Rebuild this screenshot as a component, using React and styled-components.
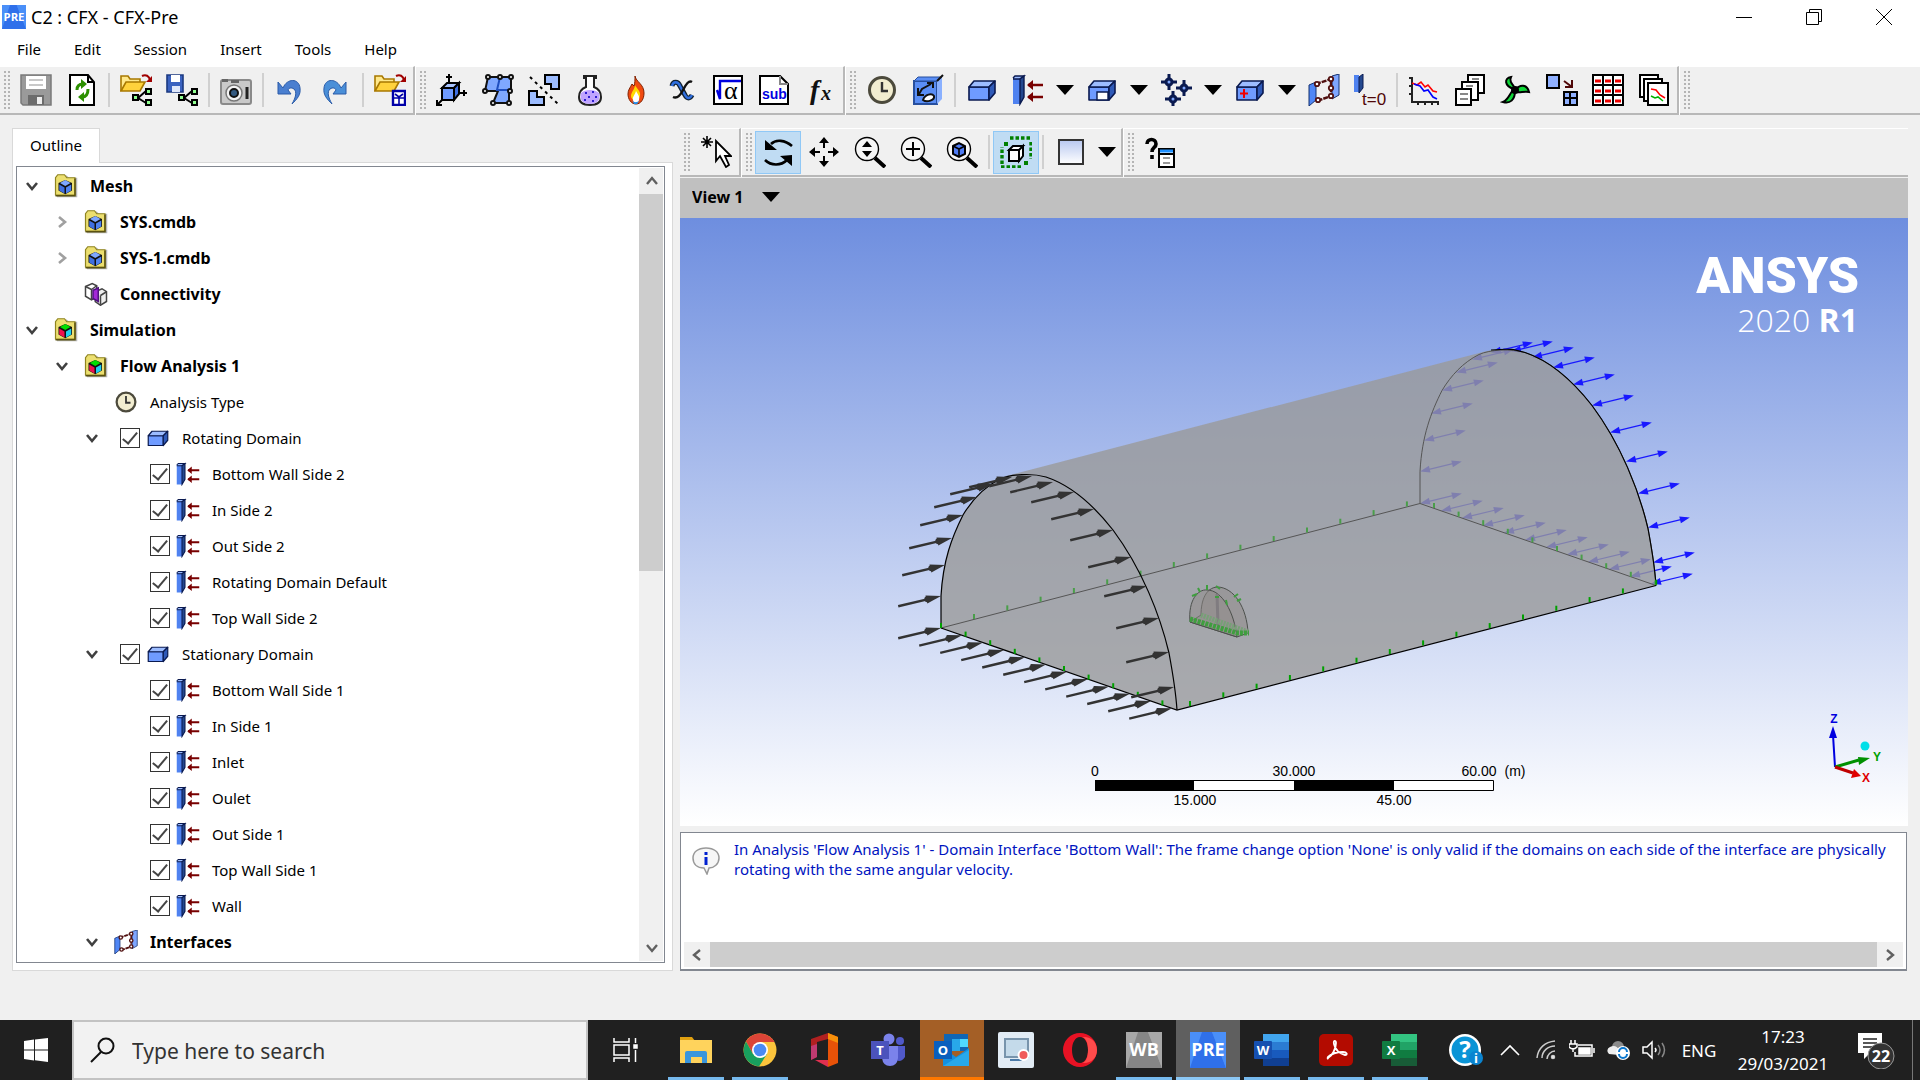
import React from "react";
import styled, { createGlobalStyle, css } from "styled-components";

const GlobalStyle = createGlobalStyle`
  * {
    box-sizing: border-box;
  }
  body {
    margin: 0;
    background: #f0f0f0;
    color: #000;
    font-family: "Noto Sans", "Open Sans", sans-serif;
    font-size: 15px;
  }
  button, input, select {
    font: inherit;
    color: inherit;
  }
`;

/* ---------- layout ---------- */

const Page = styled.div`
  display: flex;
  flex-direction: column;
  min-height: 100vh;
`;

const TitleBar = styled.header`
  display: flex;
  align-items: center;
  height: 34px;
  padding-left: 2px;
  background: #fff;
`;

const Title = styled.h1`
  flex: 1;
  margin: 0 0 0 5px;
  font-size: 18px;
  font-weight: 400;
`;

const WindowButton = styled.button`
  display: flex;
  align-items: center;
  justify-content: center;
  width: 70px;
  height: 34px;
  padding: 0 2px 0 0;
  border: 0;
  background: none;
`;

const MenuBar = styled.nav`
  display: flex;
  align-items: center;
  gap: 33px;
  height: 32px;
  padding: 0 0 3px 17px;
  background: #fff;
`;

const MenuItem = styled.button`
  padding: 0;
  border: 0;
  background: none;
`;

const ToolRow = styled.div`
  display: flex;
  gap: 1px;
  height: 49px;
  background: #fff;
`;

const ToolGroup = styled.div`
  display: flex;
  align-items: center;
  flex: ${p => (p.$grow ? "1" : "none")};
  border-top: 1px solid #fff;
  border-bottom: 2px solid #b8b8b8;
  border-right: ${p => (p.$grow ? "0" : "2px solid #b8b8b8")};
  background: #f0f0f0;
`;

const Grip = styled.span`
  width: 6px;
  height: 38px;
  margin: 0 3px 0 4px;
  background-image: radial-gradient(circle at 1px 1px, #b4b4b4 1px, transparent 1px);
  background-size: 4px 4px;
`;

const ToolButton = styled.button`
  display: flex;
  align-items: center;
  justify-content: center;
  width: ${p => (p.$narrow ? "28px" : "46px")};
  height: 43px;
  padding: 0;
  border: 1px solid ${p => (p.$active ? "#90c8f6" : "transparent")};
  background: ${p => (p.$active ? "#c0dcf3" : "none")};
`;

const Separator = styled.span`
  width: 2px;
  height: 34px;
  margin: 0 3px;
  background: #d0d0d0;
`;

const Main = styled.main`
  display: flex;
  flex: 1;
  gap: 7px;
  padding: 13px 12px 49px;
`;

const Side = styled.section`
  display: flex;
  flex-direction: column;
  width: 661px;
`;

const Tab = styled.button`
  align-self: flex-start;
  width: 88px;
  height: 35px;
  margin-bottom: -1px;
  padding: 0 0 2px;
  border: 1px solid #d9d9d9;
  border-bottom: 0;
  background: #fff;
  z-index: 1;
`;

const TabPanel = styled.div`
  display: flex;
  flex: 1;
  padding: 3px 7px 7px 3px;
  border: 1px solid #d9d9d9;
  background: #fff;
`;

const TreeBox = styled.div`
  display: flex;
  flex: 1;
  padding: 1px;
  border: 1px solid #828790;
`;

const Tree = styled.ul`
  flex: 1;
  margin: 0;
  padding: 0;
  list-style: none;
`;

const Row = styled.li`
  display: flex;
  align-items: center;
  height: 36px;
  padding: 0 0 1px ${p => p.$level * 30}px;
  font-size: ${p => (p.$bold ? 16 : 15)}px;
  font-weight: ${p => (p.$bold ? 700 : 400)};
`;

const Toggle = styled.button`
  display: flex;
  align-items: center;
  justify-content: center;
  width: 28px;
  height: 28px;
  padding: 0;
  border: 0;
  background: none;
`;

const ToggleSpace = styled.span`
  width: 28px;
`;

const ItemLabel = styled.label`
  display: flex;
  align-items: center;
  padding-left: ${p => (p.$check ? "14px" : "8px")};

  svg {
    margin-right: 12px;
  }
`;

const Check = styled.input`
  appearance: none;
  display: flex;
  justify-content: center;
  width: 20px;
  height: 20px;
  margin: 0 6px 0 0;
  border: 1px solid #333;
  background: #fff;

  &:checked::after {
    content: "";
    width: 6px;
    height: 13px;
    border: solid #444;
    border-width: 0 2px 2px 0;
    transform: rotate(40deg);
  }
`;

const ScrollBar = styled.div`
  display: flex;
  flex-direction: ${p => (p.$horizontal ? "row" : "column")};
  ${p => (p.$horizontal ? "height: 25px;" : "width: 24px;")}
  background: #f0f0f0;
`;

const ScrollButton = styled.button`
  display: flex;
  align-items: center;
  justify-content: center;
  width: 26px;
  height: 26px;
  padding: 0;
  border: 0;
  background: none;
`;

const Thumb = styled.div`
  flex: ${p => p.$size};
  background: #cdcdcd;
`;

const Rest = styled.div`
  flex: ${p => p.$size};
`;

const Work = styled.section`
  display: flex;
  flex-direction: column;
  flex: 1;
  min-width: 0;
`;

const ViewHeader = styled.label`
  display: flex;
  align-items: center;
  height: 40px;
  margin-top: 1px;
  padding: 0 12px 3px;
  background: #c0c0c0;
`;

const ViewSelect = styled.select`
  appearance: none;
  width: 70px;
  padding: 0;
  border: 0;
  background: none;
  font-size: 16px;
  font-weight: 700;
`;

const Viewport = styled.div`
  display: flex;
  flex: 1;
  min-height: 400px;
  background: linear-gradient(#6e8edf, #fff);

  svg {
    flex: 1;
    width: 100%;
  }
`;

const Messages = styled.div`
  display: flex;
  flex-direction: column;
  height: 139px;
  margin-top: 6px;
  margin-right: 1px;
  padding: 3px 3px 2px;
  border: 1px solid #828790;
  border-bottom-width: 2px;
  background: #fff;
`;

const Message = styled.div`
  display: flex;
  flex: 1;
  gap: 14px;
  padding: 3px 0 0 8px;
  color: #0014c0;
  font-size: 15px;
  line-height: 20px;
  overflow: hidden;

  p {
    margin: 0;
    white-space: pre;
  }
  svg {
    flex: none;
    margin-top: 8px;
  }
`;

const TaskBar = styled.footer`
  display: flex;
  height: 60px;
  background: #202020;
  color: #fff;
`;

const StartButton = styled.button`
  display: flex;
  flex: none;
  align-items: center;
  justify-content: center;
  width: ${p => p.$width}px;
  padding: 0;
  border: 0;
  background: none;
`;

const SearchBox = styled.label`
  display: flex;
  align-items: center;
  gap: 16px;
  width: 516px;
  padding-left: 16px;
  border: 2px solid #c3c3c3;
  background: #f2f2f2;
  color: #222;
`;

const SearchInput = styled.input`
  flex: 1;
  border: 0;
  outline: 0;
  padding: 2px 0 0;
  background: none;
  font-size: 21px;

  &::placeholder {
    color: #333;
  }
`;

const TaskButton = styled.button`
  display: flex;
  flex: none;
  align-items: center;
  justify-content: center;
  width: 64px;
  padding: 0;
  border: 0;
  background: ${p => p.$bg || "none"};
  ${p => p.$line && css`
    padding-top: 3px;
    border-image: linear-gradient(90deg, transparent ${p.$bg ? 0 : 10}%, ${p.$line} ${p.$bg ? 0 : 10}%, ${p.$line} ${p.$bg ? 100 : 90}%, transparent ${p.$bg ? 100 : 90}%) 3;
    border-style: solid;
    border-width: 0 0 3px;
  `}
`;

const Tray = styled.div`
  display: flex;
  align-items: center;
  flex: 1;
  justify-content: flex-end;
  font-size: 17px;
`;

const TrayButton = styled.button`
  display: flex;
  align-items: center;
  justify-content: center;
  width: ${p => p.$width || 36}px;
  height: 60px;
  padding: 0;
  border: 0;
  background: none;
`;

const Clock = styled.time`
  width: 114px;
  text-align: center;
  line-height: 27px;
`;

const ShowDesktop = styled.button`
  width: 8px;
  height: 60px;
  padding: 0;
  border: 0;
  border-left: 1px solid #777;
  background: none;
`;

/* ---------- icons ---------- */

const Svg = ({ size = 32, children, ...rest }) => (
  <svg width={size} height={size} viewBox="0 0 32 32" fill="none" aria-hidden="true" {...rest}>
    {children}
  </svg>
);

const Folder = () => (
  <g>
    <path d="M1 17V2h7l2 3h10v4" fill="#ffe88a" stroke="#a87800" strokeWidth="1.6" />
    <path d="M1 17L6 8h19l-5 9z" fill="#ffd23c" stroke="#a87800" strokeWidth="1.6" />
    <path d="M22 2c4-2 7 0 8 4" stroke="#a00000" strokeWidth="2" />
    <path d="M32 2v6h-6z" fill="#a00000" />
  </g>
);

const Nodes = () => (
  <g fill="#90ff90" stroke="#000" strokeWidth="2">
    <path d="M18 24L26 17M18 24l8 5" />
    <path d="M13 21h5v5h-5zM26 15h5v5h-5zM26 26h5v5h-5z" />
  </g>
);

const Block = () => (
  <g stroke="#0a1a50" strokeWidth="1.6" strokeLinejoin="round">
    <path d="M3 13h20v13H3z" fill="#6f9bff" />
    <path d="M3 13l5-6h21l-6 6z" fill="#9cbcff" />
    <path d="M23 13l6-6v12l-6 7z" fill="#2f5ab8" />
  </g>
);

const Slab = () => (
  <g stroke="#0a1a50" strokeWidth="1.4">
    <path d="M1 4h7v26H1z" fill="#4f82f0" stroke="none" />
    <path d="M1 4l2-2h9L8 5H1" fill="#9cbcff" />
    <path d="M8 5l4-3v21l-4 7z" fill="#24488f" />
  </g>
);

const Lens = ({ children }) => (
  <g stroke="#000">
    <circle cx="13" cy="13" r="11.5" strokeWidth="1.4" fill="#f6f6f6" />
    <path d="M21 22l10 9" strokeWidth="4" />
    {children}
  </g>
);

const ClockFace = () => (
  <g>
    <circle cx="16" cy="16" r="12.5" fill="#f2edd0" stroke="#4c4a3c" strokeWidth="3" />
    <path d="M16 8v9h6" stroke="#333" strokeWidth="2.4" />
  </g>
);

const InterfaceShape = () => (
  <g>
    <path d="M1 11l7-3v18l-7 6z" fill="#4f86f5" stroke="#14306e" />
    <path d="M24 2l7-2v21l-7 4z" fill="#7ea6ff" stroke="#14306e" />
    <path d="M8 10L23 5v17L9 27" stroke="#501010" strokeWidth="2.4" strokeDasharray="5 1" />
    <g fill="#fff" stroke="#501010" strokeWidth="1.8">
      <circle cx="9" cy="10" r="2.2" /><circle cx="23" cy="5" r="2.2" />
      <circle cx="23" cy="14" r="2.2" /><circle cx="23" cy="22" r="2.2" /><circle cx="10" cy="26" r="2.2" />
    </g>
  </g>
);

const CubeFolder = ({ a, b, c }) => (
  <g>
    <path d="M4 31V5h2l2-3h9l3 3h11v26z" fill="#333" opacity=".35" />
    <path d="M2 28V5l3-4h9l3 4h11v23z" fill="#ecdf70" stroke="#8f8420" strokeWidth="1.6" />
    <path d="M15 8l9 4v10l-9 5-9-5V12z" fill="#111" />
    <path d="M15 8l7 4-7 4-7-4z" fill={a} />
    <path d="M7 14l7 4v8l-7-4z" fill={b} />
    <path d="M23 14l-7 4v8l7-4z" fill={c} />
    <path d="M28 6v23H2" stroke="#5a5210" strokeWidth="2" />
  </g>
);

const icons = {
  save: (
    <g>
      <path d="M1 1h30v30H3l-2-2z" fill="#9a9a9a" stroke="#7a7a7a" strokeWidth="1.5" />
      <path d="M6 2h20v13H6z" fill="#fff" />
      <path d="M9 6h14M9 11h14" stroke="#c8c8c8" strokeWidth="2" />
      <path d="M8 21h16v10H8z" fill="#6c6c6c" />
      <path d="M17 23h5v7h-5z" fill="#eee" />
    </g>
  ),
  refresh: (
    <g>
      <path d="M4 1h18l6 7v23H4z" fill="#fff" stroke="#000" strokeWidth="2" />
      <path d="M22 1v7h6" stroke="#000" strokeWidth="2" />
      <path d="M11 16c0-5 3-6 6-6" stroke="#2c9000" strokeWidth="3" />
      <path d="M15 5l6 5-6 5z" fill="#2c9000" />
      <path d="M22 15c0 6-3 8-6 8" stroke="#2c9000" strokeWidth="3" />
      <path d="M18 18l-6 5 6 5z" fill="#2c9000" />
    </g>
  ),
  openCase: <g><Folder /><Nodes /></g>,
  saveCase: (
    <g>
      <path d="M1 1h16v17H1z" fill="#3a62c0" stroke="#1c3a80" strokeWidth="1.6" />
      <path d="M5 1h9v7H5z" fill="#fff" />
      <path d="M6 12h8v6H6z" fill="#dfe7fa" />
      <Nodes />
    </g>
  ),
  camera: (
    <g>
      <rect x="1" y="6" width="30" height="24" rx="2" fill="#c9c9c9" stroke="#8a8a8a" strokeWidth="2" />
      <path d="M2 5h6v3H2zM11 6h8v3h-8z" fill="#666" />
      <circle cx="14" cy="19" r="8" fill="#f4f4f4" stroke="#777" strokeWidth="1.5" />
      <circle cx="14" cy="19" r="4" fill="#345a80" stroke="#111" strokeWidth="2" />
      <path d="M27 13v12" stroke="#222" strokeWidth="3" />
    </g>
  ),
  undo: (
    <path d="M9 14C13 4 25 4 26 14c1 7-3 11-8 16 4-7 5-12 2-15-3-2-5-1-6 1l3 4H4V8z" fill="#4a7fd0" stroke="#2a5ba8" />
  ),
  redo: (
    <g transform="matrix(-1 0 0 1 30 0)">
      <path d="M9 14C13 4 25 4 26 14c1 7-3 11-8 16 4-7 5-12 2-15-3-2-5-1-6 1l3 4H4V8z" fill="#4a8fd8" stroke="#2a5ba8" />
    </g>
  ),
  openGrid: (
    <g>
      <Folder />
      <path d="M19 17h12v14H19z" fill="#fff" stroke="#0000a8" strokeWidth="2.4" />
      <path d="M19 24h12M25 22v9M21 20l4 3 4-3" stroke="#0000a8" strokeWidth="1.6" />
    </g>
  ),
  coord: (
    <g stroke="#000" strokeWidth="2">
      <path d="M13 10V0M10 3h6M22 19h9M28 16v6M7 25l-6 6M1 26v5h5" />
      <path d="M6 14h12v12H6z" fill="#6f9bff" />
      <path d="M6 14l5-5h12l-5 5z" fill="#a9c4ff" />
      <path d="M18 14l5-5v11l-5 6z" fill="#3f6fe0" />
    </g>
  ),
  mesh: (
    <g stroke="#111" strokeWidth="2">
      <path d="M6 3h23v14h-2v12H11l5-12H3z" fill="#7fa8ff" />
      <path d="M18 3l-3 13h12" stroke="#1f4fc0" />
      <g fill="#fff"><circle cx="6" cy="3" r="2" /><circle cx="18" cy="3" r="2" /><circle cx="29" cy="3" r="2" /><circle cx="3" cy="17" r="2" /><circle cx="28" cy="17" r="2" /><circle cx="11" cy="29" r="2" /><circle cx="27" cy="29" r="2" /></g>
    </g>
  ),
  split: (
    <g stroke="#000" strokeWidth="2">
      <path d="M2 3l28 27" strokeDasharray="3 4" />
      <path d="M17 1h14v14h-8v-5h-6z" fill="#9cbcff" />
      <path d="M1 17h8v6h7v8H1z" fill="#9cbcff" />
    </g>
  ),
  flask: (
    <g>
      <path d="M10 2h12v2h-2v9c5 2 7 6 7 10 0 5-4 8-11 8S5 28 5 23c0-4 2-8 7-10V4h-2z" fill="#fff" stroke="#222" strokeWidth="2" />
      <path d="M7 19c4-4 14-4 18 0 2 7-2 11-9 11S5 26 7 19z" fill="#c0a4ff" />
      <path d="M11 19h2M18 18h2M14 23h2M21 23h2M10 26h2M18 27h2" stroke="#3020d0" strokeWidth="2" />
    </g>
  ),
  flame: (
    <g>
      <path d="M15 2c1 6 9 8 9 17 0 6-3 11-8 11s-8-5-8-10c0-4 2-6 4-10l2 2c1-3 1-6 1-10z" fill="#f04a10" stroke="#802000" />
      <path d="M15 11c2 4 6 6 5 11s-9 5-9 0c0-4 4-7 4-11z" fill="#ffd800" />
      <path d="M16 17c2 4 4 5 3 9s-6 3-6 0c-1-3 2-5 3-9z" fill="#fff" />
      <path d="M12 26c2 3 5 3 8 0l-3 4h-3z" fill="#2090f0" />
    </g>
  ),
  chi: (
    <g>
      <path d="M6 12c1-5 6-5 8 0l5 9c2 4 5 4 7 0" stroke="#123" strokeWidth="5" />
      <path d="M6 12c1-5 6-5 8 0l5 9c2 4 5 4 7 0" stroke="#2f6fe0" strokeWidth="2.4" />
      <path d="M26 8c-3-2-6 2-9 8s-6 9-10 7" stroke="#111" strokeWidth="2.4" />
    </g>
  ),
  expr: (
    <g>
      <path d="M2 2h28v28H2z" fill="#fff" stroke="#000" strokeWidth="2" />
      <path d="M5 16l3 9V7h21" stroke="#0000e0" strokeWidth="2.4" />
      <text x="12" y="25" fontSize="26" fill="#000" fontFamily="Liberation Serif, serif">α</text>
    </g>
  ),
  sub: (
    <g>
      <path d="M2 2h20l8 8v20H2z" fill="#fff" stroke="#000" strokeWidth="2" />
      <path d="M22 2v8h8" stroke="#888" strokeWidth="2" />
      <text x="4" y="25" fontSize="14" fontWeight="700" fill="#0000e0" fontFamily="Liberation Sans, sans-serif">sub</text>
    </g>
  ),
  fx: (
    <g fill="#111" fontFamily="Liberation Serif, serif" fontStyle="italic" fontWeight="700">
      <text x="6" y="25" fontSize="28">f</text>
      <text x="17" y="26" fontSize="20">x</text>
    </g>
  ),
  clock: <ClockFace />,
  steps: (
    <g>
      <path d="M2 7h23v23H2z" fill="#5a8ef5" stroke="#274f9e" strokeWidth="2" />
      <path d="M25 7l5-5v23l-5 5z" fill="#89b0ff" />
      <path d="M2 7l4-4h24l-5 4z" fill="#5a8ef5" stroke="#274f9e" />
      <path d="M25 7l6-6" stroke="#111" strokeWidth="2" />
      <path d="M7 20l3-5 9-5M6 14v7h6M15 9h6v5" stroke="#111" strokeWidth="2" />
      <path d="M11 26c2-6 9-7 11-4 1 4-7 7-11 4z" fill="#fff" stroke="#111" strokeWidth="2" />
    </g>
  ),
  domain: <Block />,
  boundary: (
    <g>
      <Slab />
      <path d="M16 11h15M16 23h15" stroke="#780000" strokeWidth="2.4" />
      <path d="M21 6v10l-6-5zM21 18v10l-6-5z" fill="#780000" />
    </g>
  ),
  subdomain: (
    <g><Block /><path d="M11 18h11v8H11z" fill="#fff" stroke="#0a1a50" strokeWidth="1.4" /></g>
  ),
  points: (
    <g fill="#7fa8ff" stroke="#0a1a50" strokeWidth="3">
      <path d="M9 0v16M1 8h16M24 6v16M16 14h16M13 17v15M5 25h16" />
      <circle cx="9" cy="8" r="3" /><circle cx="24" cy="14" r="3" /><circle cx="13" cy="25" r="3" />
    </g>
  ),
  source: (
    <g><Block /><path d="M10 15v9M6 19.500h8" stroke="#f00000" strokeWidth="2" /></g>
  ),
  iface: <InterfaceShape />,
  initial: (
    <g>
      <path d="M0 1h5v17H0z" fill="#4f82f0" /><path d="M5 3l4-3v14l-4 5z" fill="#24488f" stroke="#0a1a50" />
      <text x="8" y="31" fontSize="17" fill="#500808" fontFamily="Liberation Sans, sans-serif">t=0</text>
    </g>
  ),
  plot: (
    <g>
      <path d="M4 3v25h27M1 4h3M1 12h3M1 20h3M10 28v3M17 28v3M24 28v3M30 28v3" stroke="#222" strokeWidth="2" />
      <path d="M4 9l5 2 4-3 4 5 3-2 5 6 4 1" stroke="#f00" strokeWidth="1.6" />
      <path d="M6 10l6 2 4 5 4-1 5 7 4 2" stroke="#00f" strokeWidth="1.6" />
    </g>
  ),
  outputs: (
    <g fill="#fff" stroke="#000" strokeWidth="2">
      <path d="M14 1h16v18H14z" /><path d="M8 8h16v18H8z" /><path d="M2 15h15v16H2z" />
      <path d="M6 20h8M6 25h8M12 12h7M18 5h7" stroke="#888" />
    </g>
  ),
  fan: (
    <g stroke="#000" strokeWidth="2" fill="#10d838">
      <path d="M14 15C4 12 4 4 11 3c-2 4 1 7 4 11z" />
      <path d="M15 16c5-6 12-6 14 2-5-1-9 1-12 0z" />
      <path d="M15 17c0 9-5 13-12 11 5-2 6-7 10-12z" />
      <circle cx="15" cy="16" r="3" fill="#000" />
    </g>
  ),
  transfer: (
    <g stroke="#000" strokeWidth="2">
      <path d="M1 1h12v13H1z" fill="#8fb0ff" />
      <path d="M18 7l8 6M26 6v7h-7" stroke="#500808" />
      <path d="M18 18h13v13H18zM18 24h13M24 18v13" fill="#8fb0ff" />
    </g>
  ),
  table: (
    <g>
      <path d="M1 1h30v30H1z" fill="#fff" />
      <path d="M3 7h6M13 7h6M23 7h6M3 17h6M13 17h6M23 17h6M3 27h6M13 27h6M23 27h6" stroke="#f00000" strokeWidth="3" />
      <path d="M1 1h30v30H1zM11 1v30M21 1v30M1 11h30M1 21h30" stroke="#000" strokeWidth="2" />
    </g>
  ),
  charts: (
    <g fill="#fff" stroke="#000" strokeWidth="2">
      <path d="M2 1h18v22H2z" /><path d="M6 5h18v22H6z" /><path d="M10 9h20v22H10z" />
      <path d="M13 15l5 1 4 5 5 3" stroke="#f00" strokeWidth="1.6" /><path d="M13 22l4 2 3-1 5 4" stroke="#00b000" strokeWidth="1.6" />
    </g>
  ),
  pick: (
    <g stroke="#000">
      <path d="M7 0v12M1 6h12M3 2l8 8M11 2l-8 8" strokeWidth="1.6" />
      <path d="M16 5v20l4-5 6 11 3-2-4-9h6z" fill="#fff" strokeWidth="1.8" />
    </g>
  ),
  rotate: (
    <g>
      <path d="M9 8c5-5 14-4 21 2M3 24c6 6 16 6 22 0" stroke="#000" strokeWidth="2.600" />
      <path d="M3 4v10h12zM30 19v11L18 20z" fill="#000" />
    </g>
  ),
  pan: (
    <g>
      <path d="M16 5v7M16 20v7M4 16h8M20 16h8" stroke="#000" strokeWidth="2" />
      <path d="M16 1l5 6H11zM16 31l5-6H11zM1 16l6-5v10zM31 16l-6-5v10z" fill="#000" />
    </g>
  ),
  zoomDrag: <Lens><path d="M13 5l5 6H8zM13 21l5-6H8z" fill="#000" stroke="none" /></Lens>,
  zoomIn: <Lens><path d="M13 6v14M6 13h14" strokeWidth="2" /></Lens>,
  zoomFit: <Lens><path d="M7 10l6-3 6 3v8l-6 3-6-3z" fill="#4f7cf5" strokeWidth="2" /><path d="M7 10l6 3 6-3M13 13v7" strokeWidth="1.600" /></Lens>,
  highlight: (
    <g>
      <path d="M10 2h22M31 6v17M1 31h21M2 28V11" stroke="#008000" strokeWidth="3.400" strokeDasharray="3.500 2" />
      <path d="M4 6h4v4H4zM24 25h4v4h-4z" fill="#008000" />
      <path d="M9 14h10v11H9z" fill="#fff" stroke="#000" strokeWidth="2" />
      <path d="M9 14l4-4h10l-4 4zM19 14l4-4v10l-4 5z" fill="#fff" stroke="#000" strokeWidth="2" />
    </g>
  ),
  color: (
    <g>
      <defs><linearGradient id="swatch" x2="0" y2="1"><stop stopColor="#b8c8f0" /><stop offset="1" stopColor="#fff" /></linearGradient></defs>
      <path d="M5 4h24v24H5z" fill="url(#swatch)" stroke="#333" strokeWidth="2" />
    </g>
  ),
  help: (
    <g>
      <path d="M3 8c0-6 9-6 9 0 0 4-4 3-4 8M8 19v4" stroke="#000" strokeWidth="3.600" />
      <path d="M15 13h15v18H15z" fill="#fff" stroke="#000" strokeWidth="2" />
      <path d="M16 15h13" stroke="#1e90ff" strokeWidth="3" />
      <path d="M16 18h13" stroke="#000" strokeWidth="2" />
      <path d="M19 22h7M19 27h7" stroke="#999" strokeWidth="2" />
    </g>
  ),
  meshFolder: <CubeFolder a="#7fa8ff" b="#3f6fe0" c="#4f82f0" />,
  simFolder: <CubeFolder a="#00e000" b="#f01050" c="#20d0f0" />,
  connect: (
    <g stroke="#444" strokeWidth="2">
      <path d="M2 6l9-4 6 3v15l-7 4-8-5z" fill="#fff" />
      <path d="M2 6l8 4v14M10 10l7-5" />
      <path d="M15 13l9-4 6 4v13l-8 5-7-5z" fill="#eee" />
      <path d="M12 11l7-3v18l-7-4z" fill="#a428d8" stroke="#501080" />
      <path d="M22 18v12M22 18l8-5" />
    </g>
  ),
};

const Icon = ({ name, size }) => <Svg size={size}>{icons[name]}</Svg>;

const DownArrow = () => (
  <svg width="18" height="10" viewBox="0 0 18 10" aria-hidden="true"><path d="M0 0h18L9 10z" /></svg>
);

const angles = { down: 0, left: 90, up: 180, right: 270 };

const Chevron = ({ dir, color = "#404040", bold = 2 }) => (
  <svg width="14" height="14" viewBox="0 0 14 14" fill="none" aria-hidden="true">
    <path d="M2 4l5 6 5-6" stroke={color} strokeWidth={bold} transform={`rotate(${angles[dir]} 7 7)`} />
  </svg>
);

/* ---------- toolbars ---------- */

const mainTools = [
  ["save", "refresh", "|", "openCase", "saveCase", "|", "camera", "|", "undo", "redo", "|", "openGrid"],
  ["coord", "mesh", "split", "flask", "flame", "chi", "expr", "sub", "fx"],
  ["clock", "steps", "|", "domain", "boundary", "v", "subdomain", "v", "points", "v", "source", "v", "iface", "initial", "|",
    "plot", "outputs", "fan", "transfer", "table", "charts"],
  [],
];

const viewTools = [
  ["pick"],
  ["rotate", "pan", "zoomDrag", "zoomIn", "zoomFit", "|", "highlight", "|", "color", "v"],
  ["help"],
];

const activeTools = ["rotate", "highlight"];

const Toolbar = ({ groups }) => (
  <ToolRow role="toolbar">
    {groups.map((tools, g) => (
      <ToolGroup key={g} $grow={g === groups.length - 1}>
        <Grip />
        {tools.map((tool, i) => {
          if (tool === "|") return <Separator key={i} />;
          if (tool === "v") {
            return <ToolButton key={i} $narrow aria-label="More"><DownArrow /></ToolButton>;
          }
          return (
            <ToolButton key={i} aria-label={tool} $active={activeTools.includes(tool)}>
              <Icon name={tool} />
            </ToolButton>
          );
        })}
      </ToolGroup>
    ))}
  </ToolRow>
);

/* ---------- outline tree ---------- */

const boundaries = names => names.map(text => ({ level: 3, icon: "boundary", text, check: true }));

const rows = [
  { level: 0, icon: "meshFolder", text: "Mesh", bold: true, open: "down" },
  { level: 1, icon: "meshFolder", text: "SYS.cmdb", bold: true, open: "right" },
  { level: 1, icon: "meshFolder", text: "SYS-1.cmdb", bold: true, open: "right" },
  { level: 1, icon: "connect", text: "Connectivity", bold: true },
  { level: 0, icon: "simFolder", text: "Simulation", bold: true, open: "down" },
  { level: 1, icon: "simFolder", text: "Flow Analysis 1", bold: true, open: "down" },
  { level: 2, icon: "clock", text: "Analysis Type" },
  { level: 2, icon: "domain", text: "Rotating Domain", check: true, open: "down" },
  ...boundaries(["Bottom Wall Side 2", "In Side 2", "Out Side 2", "Rotating Domain Default", "Top Wall Side 2"]),
  { level: 2, icon: "domain", text: "Stationary Domain", check: true, open: "down" },
  ...boundaries(["Bottom Wall Side 1", "In Side 1", "Inlet", "Oulet", "Out Side 1", "Top Wall Side 1", "Wall"]),
  { level: 2, icon: "iface", text: "Interfaces", bold: true, open: "down" },
];

const Outline = () => (
  <Side>
    <Tab>Outline</Tab>
    <TabPanel>
      <TreeBox>
        <Tree>
          {rows.map(row => (
            <Row key={row.text} $level={row.level} $bold={row.bold}>
              {row.open ? (
                <Toggle aria-label={`Toggle ${row.text}`}>
                  <Chevron dir={row.open} color={row.open === "right" ? "#a0a0a0" : "#404040"} bold={2.6} />
                </Toggle>
              ) : <ToggleSpace />}
              <ItemLabel as={row.check ? "label" : "span"} $check={row.check}>
                {row.check && <Check type="checkbox" defaultChecked />}
                <Icon name={row.icon} size={24} />
                {row.text}
              </ItemLabel>
            </Row>
          ))}
        </Tree>
        <ScrollBar>
          <ScrollButton aria-label="Scroll up"><Chevron dir="up" color="#606060" bold={2.4} /></ScrollButton>
          <Thumb $size={378} />
          <Rest $size={364} />
          <ScrollButton aria-label="Scroll down"><Chevron dir="down" color="#606060" bold={2.4} /></ScrollButton>
        </ScrollBar>
      </TreeBox>
    </TabPanel>
  </Side>
);

/* ---------- 3D scene ---------- */

// tunnel length as seen on screen
const DX = 479;
const DY = -124.5;

const arch = "M941 628L941 596C943 560 952 537 963 515C972 500 984 487 1000 479C1011 474 1032 473 1046 477C1073 486 1095 507 1113 530C1142 569 1160 615 1169 653C1174 680 1176 695 1177 710";

const archTips = [
  [941, 596], [945, 565], [952, 538], [963, 515], [977, 497], [993, 484], [1012, 477], [1032, 476], [1053, 482],
  [1074, 492], [1094, 509], [1113, 530], [1131, 557], [1147, 586], [1159, 618], [1169, 652], [1174, 687],
];
const floorTips = Array.from({ length: 12 }, (_, i) => [941 + i * 21, 628 + i * 7.3]);
const tips = [...archTips, ...floorTips];

const ticks = (x, y, dx, dy, count, color) =>
  Array.from({ length: count }, (_, i) => (
    <path key={i} d={`M${x + i * dx} ${y + i * dy}v-5`} stroke={color} strokeWidth="2" />
  ));

const Scene = () => (
  <svg viewBox="680 218 1228 608" preserveAspectRatio="xMidYMid meet" fill="none" role="img" aria-label="3D view">
    <defs>
      <g id="inflow" fill="#333">
        <path d="M-44 0h32" stroke="#333" strokeWidth="2.4" />
        <path d="M0 0l-15-4v8z" />
        <circle cx="-14" cy="0" r="3" />
      </g>
      <g id="opening" fill="#1818ff">
        <path d="M4 0h36" stroke="#1818ff" strokeWidth="1.2" />
        <path d="M0 0l10-3.500v7zM43 0l-10-3.500v7z" />
      </g>
    </defs>

    {tips.map(([x, y], i) => (
      <use key={i} href="#opening" transform={`translate(${x + DX} ${y + DY}) rotate(-13.500)`} />
    ))}

    <path
      d="M941 628L941 596C943 560 952 537 963 515C972 500 984 487 1000 479L1006 476L1485 351.500C1500 348 1513 349 1525 352.500C1552 361.500 1574 382.500 1592 405.500C1621 444.500 1639 490.500 1648 528.500C1653 555.500 1655 570.500 1656 585.500L1177 710Z"
      fill="#9a9a9a"
      opacity=".8"
    />

    <path d="M941 628L1420 503.500L1656 585.500" stroke="#555" />
    <path d={arch} transform={`translate(${DX} ${DY})`} stroke="#555" />
    <path d="M1491 350C1511 348.500 1513 349 1525 352.500C1552 361.500 1574 382.500 1592 405.500C1621 444.500 1639 490.500 1648 528.500C1653 555.500 1655 570.500 1656 585.500" stroke="#000" strokeWidth="1.200" />
    {ticks(974, 619, 33.3, -8.66, 14, "#4a9e4a")}
    {ticks(1434, 508, 24.6, 8.6, 10, "#4a9e4a")}

    <g stroke="#4c504c">
      <path d="M1201 615C1201 600 1206 588 1217 587C1234 587 1247 608 1248 633L1237 637L1190 622Z" fill="#8f8a88" fillOpacity=".5" />
      <path d="M1190 622C1188 600 1198 589 1207 590C1222 590 1234 612 1237 637Z" fill="#8f8a88" fillOpacity=".5" />
      <path d="M1217 594l1 31" stroke="#807c80" strokeWidth="3" />
      <path d="M1201 615L1248 632" stroke="#77a077" strokeWidth="5" strokeDasharray="2 1" />
      <path d="M1190 619L1237 633H1249" stroke="#3f9e3f" strokeWidth="5" strokeDasharray="3 1" />
      <path d="M1192 596l5-2M1198 588l2 4M1207 585v5M1216 586l4 3M1234 597l4-3M1237 601l4-2M1215 597h4M1226 600l1 5" stroke="#3f9e3f" strokeWidth="2" />
    </g>

    <path d={arch} stroke="#000" strokeWidth="1.200" />
    <path d="M941 628L1177 710L1656 585.500" stroke="#000" strokeWidth="1.200" />
    {ticks(941, 628, 24.6, 8.6, 10, "#00a000")}
    {ticks(1190, 706, 33.3, -8.66, 15, "#00a000")}
    {tips.map(([x, y], i) => (
      <use key={i} href="#inflow" transform={`translate(${x} ${y}) rotate(-13.500)`} />
    ))}

    <g fill="#fff" textAnchor="end">
      <text x="1859" y="293" fontSize="50" fontWeight="900" fontFamily="Roboto, sans-serif">ANSYS</text>
      <text x="1858" y="332" fontSize="32" fontWeight="300" fontFamily="Open Sans, sans-serif">
        2020 <tspan fontWeight="700">R1</tspan>
      </text>
    </g>

    <path d="M1095.500 780.500h398v10h-398z" fill="#fff" stroke="#000" />
    <path d="M1095 780h99v11h-99zM1294 780h100v11h-100z" fill="#000" />
    <g fill="#000" fontSize="14" fontFamily="Liberation Sans, sans-serif" textAnchor="middle">
      <text x="1095" y="776">0</text>
      <text x="1294" y="776">30.000</text>
      <text x="1479" y="776">60.00</text>
      <text x="1515" y="776">(m)</text>
      <text x="1195" y="805">15.000</text>
      <text x="1394" y="805">45.00</text>
    </g>

    <g fontSize="12" fontWeight="700" fontFamily="Liberation Sans, sans-serif" textAnchor="middle">
      <path d="M1835 767L1833 735" stroke="#0000e0" strokeWidth="2" />
      <path d="M1833 726l4 12h-8z" fill="#0000e0" />
      <path d="M1835 767l24-7" stroke="#009000" strokeWidth="3" />
      <path d="M1870 758l-11 7-1-8z" fill="#009000" />
      <path d="M1835 767l18 6" stroke="#c00000" strokeWidth="3" />
      <path d="M1861 776l-10 2 3-9z" fill="#e00000" />
      <circle cx="1865" cy="746" r="4.500" fill="#00dfe8" />
      <text x="1834" y="723" fill="#0000e0">Z</text>
      <text x="1877" y="761" fill="#00a000">Y</text>
      <text x="1866" y="782" fill="#e00000">X</text>
    </g>
  </svg>
);

/* ---------- taskbar ---------- */

const Tile = ({ size = 36, text, from, to, fontSize = 13 }) => (
  <svg width={size} height={size} viewBox="0 0 36 36" aria-hidden="true">
    <path d="M0 0h36v36H0z" fill={from} />
    <path d="M0 36L12 0h10l14 36z" fill={to} />
    <path d="M22 0h14v36z" fill={from} opacity=".7" />
    <text x="18" y="24" fontSize={fontSize} fontWeight="700" fill="#fff" textAnchor="middle" fontFamily="Open Sans, sans-serif">{text}</text>
  </svg>
);

const OfficeTile = ({ letter, badge, bands }) => (
  <svg width="36" height="36" viewBox="0 0 36 36" aria-hidden="true">
    {bands.map((c, i) => <path key={c} d={`M9 ${2 + i * 8}h26v8H9z`} fill={c} />)}
    <rect x="0" y="9" width="18" height="18" rx="1" fill={badge} />
    <text x="9" y="23" fontSize="13" fontWeight="700" fill="#fff" textAnchor="middle" fontFamily="Open Sans, sans-serif">{letter}</text>
  </svg>
);

const Pic = ({ children }) => (
  <svg width="36" height="36" viewBox="0 0 36 36" fill="none" aria-hidden="true">{children}</svg>
);

const LINE = "#76b9ed";

const tasks = [
  { name: "File Explorer", line: LINE, icon: <Pic><path d="M2 5h12l3 4H2z" fill="#e0a010" /><path d="M2 8h32v23H2z" fill="#ffd35c" /><path d="M7 31V21q0-2 2-2h18q2 0 2 2v10h-5v-6H13v6z" fill="#3a96dd" /></Pic> },
  { name: "Chrome", line: LINE, icon: <Pic><circle cx="18" cy="18" r="16.500" fill="#fbc43c" /><path d="M4 9.500A16.500 16.500 0 0 1 32.500 10H18L11 22z" fill="#db4437" /><path d="M4 9.500A16.500 16.500 0 0 0 17 34.500L25 22 11 22z" fill="#18a05e" /><circle cx="18" cy="18" r="8" fill="#fff" /><circle cx="18" cy="18" r="6.300" fill="#4a8af4" /></Pic> },
  { name: "Office", icon: <Pic><path d="M22 1L5 7v21l6-3V10l11-3z" fill="#b02020" /><path d="M5 14v14l6-3V12z" fill="#c03a70" /><path d="M22 1l10 4v26l-10 4z" fill="#e85208" /><path d="M22 1l10 4v6l-10-4z" fill="#f8900a" /><path d="M9 28h13v7z" fill="#e03050" /></Pic> },
  { name: "Teams", icon: <Pic><circle cx="19" cy="7" r="5.500" fill="#7b83eb" /><circle cx="30" cy="9" r="4" fill="#5059c9" /><path d="M26 14h9v11q-4 6-9 3z" fill="#5059c9" /><path d="M12 14h16v12q-1 8-8 8t-8-8z" fill="#7b83eb" /><path d="M1 9h18v18H1z" fill="#4b53bc" /><text x="10" y="23" fontSize="13" fontWeight="700" fill="#fff" textAnchor="middle" fontFamily="Open Sans, sans-serif">T</text></Pic> },
  { name: "Outlook", bg: "#a45f26", line: "#ff7800", icon: <Pic><path d="M10 2h24v17H10z" fill="#1066b5" /><path d="M18 7h8v12h-8z" fill="#28a8ea" /><path d="M26 7h8v8h-8z" fill="#50d9ff" /><path d="M9 16l13 9 13-9v18H9z" fill="#1490df" /><path d="M9 34l26-16v16z" fill="#28a8ea" /><path d="M0 9h18v18H0z" fill="#0a5fbd" /><text x="9" y="23" fontSize="13" fontWeight="700" fill="#fff" textAnchor="middle" fontFamily="Open Sans, sans-serif">O</text></Pic> },
  { name: "Steps Recorder", icon: <Pic><rect width="36" height="36" rx="2" fill="#e2ecf5" /><path d="M7 7h23v18H7z" fill="#c4daea" stroke="#7894ac" strokeWidth="2" /><path d="M12 28h12" stroke="#4a7aa8" strokeWidth="2" /><circle cx="25.500" cy="23" r="5" fill="#f05a5a" stroke="#fff" strokeWidth="2" /></Pic> },
  { name: "Opera", icon: <Pic><path fillRule="evenodd" d="M18 1a17 17 0 1 0 0 34a17 17 0 1 0 0-34zM18 5c5 0 8 6 8 13s-3 13-8 13-8-6-8-13 3-13 8-13z" fill="#e81224" /><path d="M20 5c4 1 6 6 6 13s-2 12-6 13c9 1 15-5 15-13S29 4 20 5z" fill="#ff4b4b" /></Pic> },
  { name: "Workbench", line: LINE, icon: <Tile text="WB" from="#a8a8a8" to="#868686" fontSize={18} /> },
  { name: "CFX-Pre", bg: "#5f5f5f", line: "#8cc8f5", icon: <Tile text="PRE" from="#4a8ff8" to="#2f70ea" fontSize={18} /> },
  { name: "Word", line: LINE, icon: <OfficeTile letter="W" badge="#1650b0" bands={["#41a5ee", "#2b7cd3", "#185abd", "#103f91"]} /> },
  { name: "Acrobat", line: LINE, icon: <Pic><rect x="1" y="2" width="34" height="32" rx="5" fill="#b30b00" /><path d="M10 26c4-2 8-9 8-15 0-3-3-3-2 1 1 6 6 10 11 11 3 0 2-3-2-3-6 0-12 2-15 5-1 2 0 2 0 1z" stroke="#fff" strokeWidth="1.800" /></Pic> },
  { name: "Excel", line: LINE, icon: <OfficeTile letter="X" badge="#107c41" bands={["#33c481", "#21a366", "#107c41", "#185c37"]} /> },
];

const WindowsTaskBar = () => (
  <TaskBar>
    <StartButton $width={72} aria-label="Start">
      <svg width="24" height="24" viewBox="0 0 24 24" fill="#fff"><path d="M0 3l10-1.400V11.500H0zM11 1.500L24 0v11.500H11zM0 12.500h10v9.900L0 21zM11 12.500h13V24l-13-1.700z" /></svg>
    </StartButton>
    <SearchBox>
      <svg width="26" height="26" viewBox="0 0 26 26" fill="none" stroke="#111" strokeWidth="2"><circle cx="16" cy="9" r="7.500" /><path d="M11 15L1 25" /></svg>
      <SearchInput type="text" aria-label="Search" placeholder="Type here to search" />
    </SearchBox>
    <StartButton $width={76} aria-label="Task View">
      <svg width="26" height="24" viewBox="0 0 26 24" fill="none" stroke="#fff" strokeWidth="1.500"><path d="M1 0v4h15V0M1 7h15v10H1zM1 24v-4h15v4M22.500 0v5M22.500 12v12" /><path d="M21 7h3v3h-3z" fill="#fff" /></svg>
    </StartButton>
    {tasks.map(t => (
      <TaskButton key={t.name} aria-label={t.name} $bg={t.bg} $line={t.line}>{t.icon}</TaskButton>
    ))}
    <Tray>
      <TrayButton $width={52} aria-label="Get help">
        <svg width="36" height="34" viewBox="0 0 36 34"><circle cx="17" cy="17" r="16" fill="#fff" /><circle cx="17" cy="17" r="13.500" fill="#0a94d6" /><text x="17" y="25" fontSize="24" fontWeight="700" fill="#fff" textAnchor="middle" fontFamily="Open Sans, sans-serif">?</text><circle cx="28" cy="25" r="7" fill="#0a84d0" /><text x="28" y="30" fontSize="13" fontWeight="700" fill="#fff" textAnchor="middle" fontFamily="Open Sans, sans-serif">i</text></svg>
      </TrayButton>
      <TrayButton aria-label="Show hidden icons">
        <svg width="20" height="12" viewBox="0 0 20 12" fill="none" stroke="#fff" strokeWidth="1.600"><path d="M1 11l9-9 9 9" /></svg>
      </TrayButton>
      <TrayButton aria-label="Network">
        <svg width="20" height="20" viewBox="0 0 20 20" fill="none" stroke="#ccc" strokeWidth="1.500"><path d="M1 18C2 8 9 2 19 1M6 18c0-7 6-12 13-12M11 19c0-4 4-8 8-8" /><circle cx="17" cy="17" r="1.500" fill="#fff" /></svg>
      </TrayButton>
      <TrayButton aria-label="Battery">
        <svg width="26" height="20" viewBox="0 0 26 20" fill="none" stroke="#fff" strokeWidth="1.500"><path d="M9 5h14v11H6v-4M25 8v5M2 0v4M6 0v4M0 4h8v3q-4 4-8 0zM4 8v4" /><path d="M10 8h11v6H10z" fill="#fff" /></svg>
      </TrayButton>
      <TrayButton aria-label="OneDrive">
        <svg width="26" height="22" viewBox="0 0 26 22" fill="none"><path d="M7 8a6 6 0 0 1 12 0q3 1 3 6H8z" fill="#8a8a8a" /><path d="M4 15a4 4 0 0 1 1-7q6-3 9 3v5z" fill="#eee" /><circle cx="18" cy="14" r="7" fill="#fff" /><path d="M14 13a4 4 0 0 1 8 0M22 15a4 4 0 0 1-8 0" stroke="#0a78d0" strokeWidth="2" /></svg>
      </TrayButton>
      <TrayButton aria-label="Volume">
        <svg width="24" height="20" viewBox="0 0 24 20" fill="none" stroke="#fff" strokeWidth="1.500"><path d="M1 7h4l5-5v16l-5-5H1z" /><path d="M13 8q2 2 0 4" /><path d="M16 5q4 5 0 10M20 3q5 7 0 14" stroke="#888" /></svg>
      </TrayButton>
      <TrayButton $width={54}>ENG</TrayButton>
      <Clock>17:23<br />29/03/2021</Clock>
      <TrayButton $width={72} aria-label="Notifications">
        <svg width="40" height="38" viewBox="0 0 40 38"><path d="M2 2h24v20H14l-6 6v-6H2z" fill="#fff" /><path d="M7 8h14M7 12h14M7 16h14" stroke="#222" strokeWidth="1.500" /><circle cx="25" cy="25" r="13" fill="#333" stroke="#999" /><text x="25" y="31" fontSize="16" fontWeight="700" fill="#fff" textAnchor="middle" fontFamily="Open Sans, sans-serif">22</text></svg>
      </TrayButton>
      <ShowDesktop aria-label="Show desktop" />
    </Tray>
  </TaskBar>
);

const App = () => (
  <Page>
    <GlobalStyle />
    <TitleBar>
      <Tile size={24} text="PRE" from="#4a8ff8" to="#2f70ea" fontSize={17} />
      <Title>C2 : CFX - CFX-Pre</Title>
      <WindowButton aria-label="Minimize"><svg width="16" height="16"><path d="M0 8.500h16" stroke="#000" /></svg></WindowButton>
      <WindowButton aria-label="Restore"><svg width="16" height="16" fill="none" stroke="#000"><path d="M.5 3.500h12v12H.5zM3.500 3.500v-3h12v12h-3" /></svg></WindowButton>
      <WindowButton aria-label="Close"><svg width="16" height="16" stroke="#000"><path d="M0 0l16 16M16 0L0 16" /></svg></WindowButton>
    </TitleBar>
    <MenuBar>
      {["File", "Edit", "Session", "Insert", "Tools", "Help"].map(m => <MenuItem key={m}>{m}</MenuItem>)}
    </MenuBar>
    <Toolbar groups={mainTools} />
    <Main>
      <Outline />
      <Work>
        <Toolbar groups={viewTools} />
        <ViewHeader>
          <ViewSelect aria-label="View"><option>View 1</option></ViewSelect>
          <DownArrow />
        </ViewHeader>
        <Viewport>
          <Scene />
        </Viewport>
        <Messages>
          <Message>
            <svg width="28" height="28" viewBox="0 0 28 28" aria-hidden="true"><path d="M14 1c8 0 13 4 13 10s-5 10-10 10l-2 6-3-6C5 21 1 17 1 11S6 1 14 1z" fill="#f6f6f6" stroke="#999" strokeWidth="1.500" /><path d="M14 5v3M14 10v8" stroke="#0020d0" strokeWidth="3" /></svg>
            <p>
              {"In Analysis 'Flow Analysis 1' - Domain Interface 'Bottom Wall': The frame change option 'None' is only valid if the domains on each side of the interface are physically\nrotating with the same angular velocity."}
            </p>
          </Message>
          <ScrollBar $horizontal>
            <ScrollButton aria-label="Scroll left"><Chevron dir="left" color="#606060" bold={2.4} /></ScrollButton>
            <Thumb $size={1} />
            <ScrollButton aria-label="Scroll right"><Chevron dir="right" color="#606060" bold={2.4} /></ScrollButton>
          </ScrollBar>
        </Messages>
      </Work>
    </Main>
    <WindowsTaskBar />
  </Page>
);

export default App;
